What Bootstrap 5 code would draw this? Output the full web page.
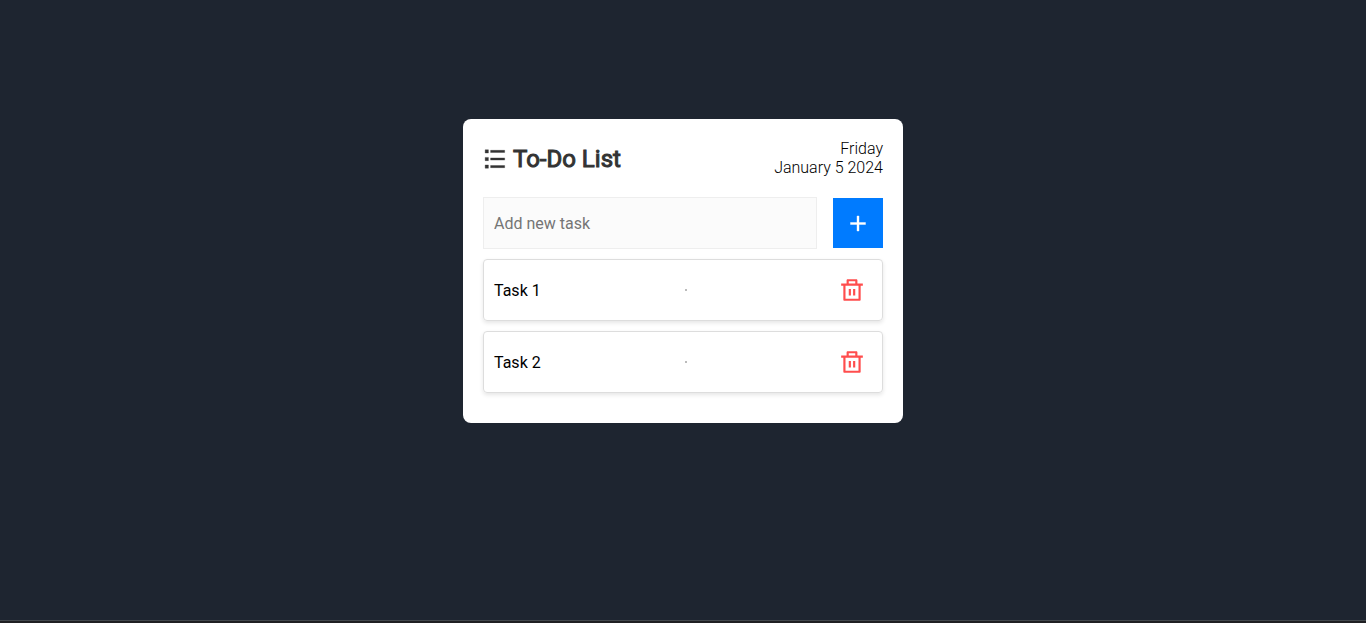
<!DOCTYPE html>
<html lang="en">
<head>
<meta charset="utf-8">
<meta name="viewport" content="width=device-width, initial-scale=1">
<title>To-Do List</title>
<link href="https://cdn.jsdelivr.net/npm/bootstrap@5.3.0/dist/css/bootstrap.min.css" rel="stylesheet">
<style>
  body { background: #1e2530; font-family: Roboto, sans-serif; font-size: 16px; line-height: 19px; color: #000; }
  .page { padding-bottom: 78px; }
  .page-end { height: 3px; background: #1f2023; border-top: 1px solid #43484d; }
  .todo { width: 100%; max-width: 440px; padding: 20px 20px 30px; border-radius: 8px; background: #fff; }
  .todo-head { margin-bottom: 20px; color: #333; }
  .todo-title { padding-top: 2px; font-size: 24px; line-height: 28px; font-weight: 400; -webkit-text-stroke: 1px #333; gap: 4px; }
  .todo-date { font-weight: 300; color: #000; }
  .todo-form { gap: 16px; margin-bottom: 10px; }
  .todo-input, .todo-input:focus { height: 52px; padding: 10px; border: 1px solid #eee; border-radius: 0; background: #fbfbfb; font-size: 16px; }
  .todo-input::placeholder { color: #757575; }
  .todo-add, .todo-add:hover { width: 50px; height: 50px; border: 0; border-radius: 0; background: #007bff; color: #fff; }
  .todo-items { gap: 10px; }
  .todo-item { padding: 10px; border: 1px solid #ddd; border-radius: 4px; box-shadow: 0 2px 4px rgba(0, 0, 0, .1); }
  .todo-delete, .todo-delete:hover { width: 40px; height: 40px; border: 0; color: #ff4d4d; }
  .todo-dot { width: 2px; height: 2px; background: #bbb; }
</style>
</head>
<body>
<div class="min-vh-100 d-flex flex-column">
  <main class="page flex-grow-1 d-flex align-items-center justify-content-center">
    <section class="todo">
      <header class="todo-head d-flex justify-content-between align-items-center">
        <h1 class="todo-title d-flex align-items-center mb-0">
          <svg width="26" height="26" viewBox="1 0 24 24" fill="currentColor" stroke="currentColor" stroke-width=".3" aria-hidden="true"><path d="M8 4H21V6H8V4ZM3 3.5H6V6.5H3V3.5ZM3 10.5H6V13.5H3V10.5ZM3 17.5H6V20.5H3V17.5ZM8 11H21V13H8V11ZM8 18H21V20H8V18Z"/></svg>
          <span>To-Do List</span>
        </h1>
        <div class="todo-date text-end">
          <div>Friday</div>
          <div>January 5 2024</div>
        </div>
      </header>
      <form class="todo-form d-flex align-items-center">
        <input type="text" class="todo-input form-control" placeholder="Add new task" aria-label="Add new task">
        <button type="button" class="todo-add btn p-0 flex-shrink-0 d-flex align-items-center justify-content-center" aria-label="Add task">
          <svg width="26" height="26" viewBox="0 0 26 26" fill="currentColor" stroke="currentColor" stroke-width=".4" aria-hidden="true"><path d="M12 12.5V6H14V12.5H20.5V14.5H14V21H12V14.5H5.5V12.5H12Z"/></svg>
        </button>
      </form>
      <ul class="todo-items list-unstyled d-flex flex-column mb-0">
        <li class="todo-item d-flex justify-content-between align-items-center">
          <span>Task 1</span>
          <span class="todo-dot"></span>
          <button type="button" class="todo-delete btn p-0 d-flex align-items-center justify-content-center" aria-label="Delete Task 1">
            <svg width="26" height="26" viewBox="0 0 24 24" fill="currentColor" aria-hidden="true"><path d="M17 6H22V8H20V21C20 21.55 19.55 22 19 22H5C4.45 22 4 21.55 4 21V8H2V6H7V3C7 2.45 7.45 2 8 2H16C16.55 2 17 2.45 17 3V6ZM18 8H6V20H18V8ZM9 11H11V17H9V11ZM13 11H15V17H13V11ZM9 4V6H15V4H9Z"/></svg>
          </button>
        </li>
        <li class="todo-item d-flex justify-content-between align-items-center">
          <span>Task 2</span>
          <span class="todo-dot"></span>
          <button type="button" class="todo-delete btn p-0 d-flex align-items-center justify-content-center" aria-label="Delete Task 2">
            <svg width="26" height="26" viewBox="0 0 24 24" fill="currentColor" aria-hidden="true"><path d="M17 6H22V8H20V21C20 21.55 19.55 22 19 22H5C4.45 22 4 21.55 4 21V8H2V6H7V3C7 2.45 7.45 2 8 2H16C16.55 2 17 2.45 17 3V6ZM18 8H6V20H18V8ZM9 11H11V17H9V11ZM13 11H15V17H13V11ZM9 4V6H15V4H9Z"/></svg>
          </button>
        </li>
      </ul>
    </section>
  </main>
  <footer class="page-end"></footer>
</div>
<script src="https://cdn.jsdelivr.net/npm/bootstrap@5.3.0/dist/js/bootstrap.bundle.min.js"></script>
</body>
</html>
